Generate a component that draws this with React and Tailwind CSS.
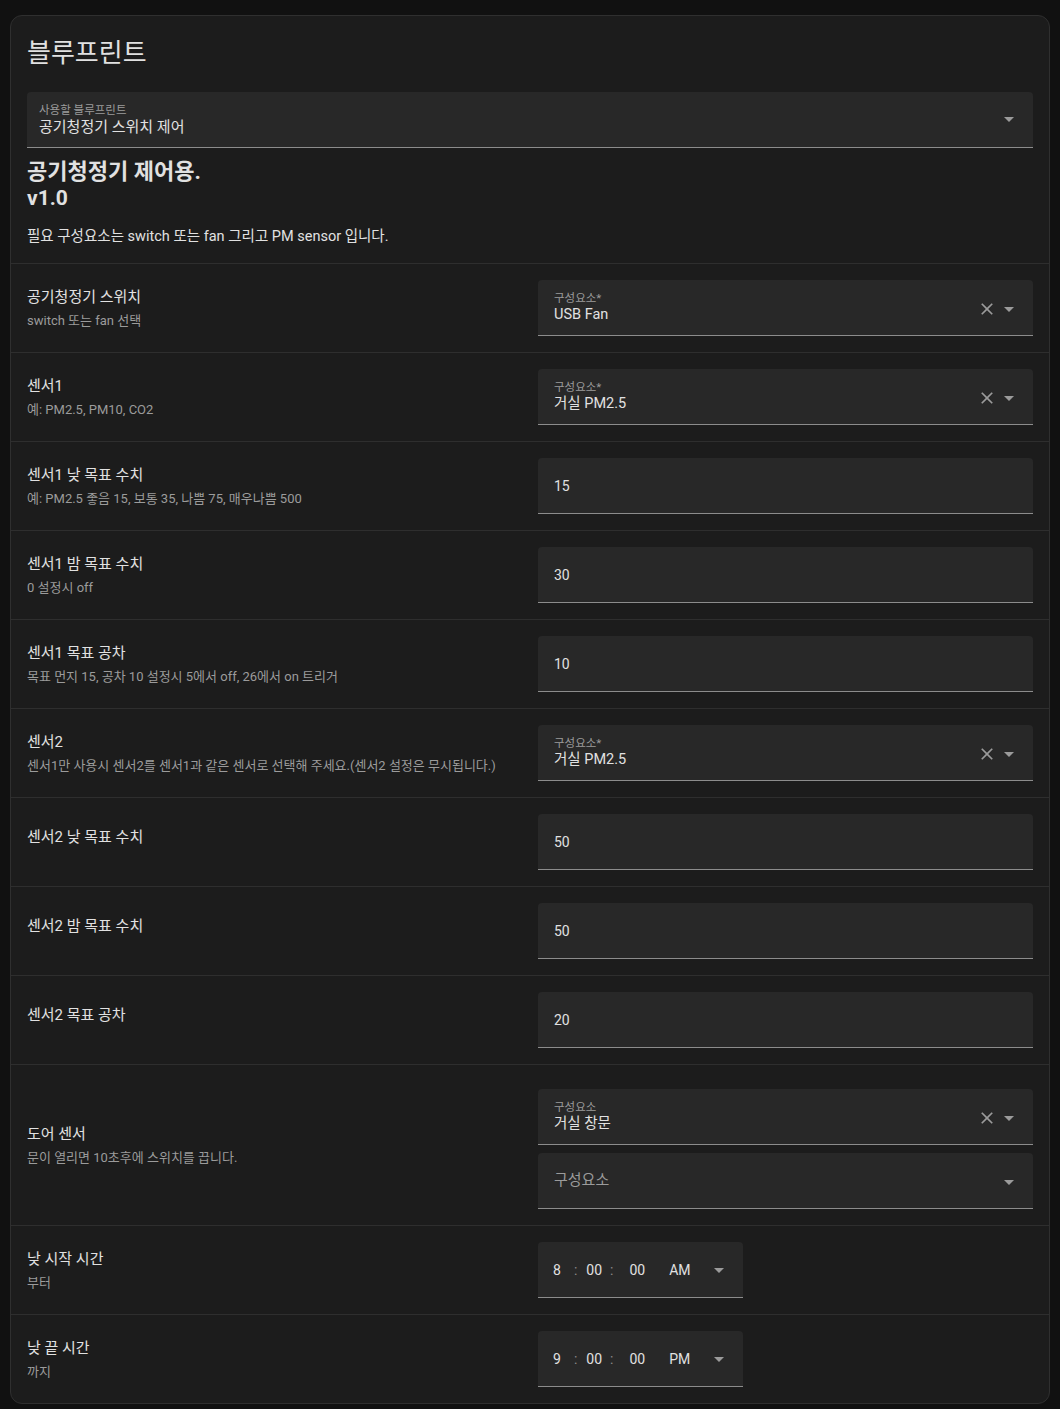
import React from "react";

const FONT = { fontFamily: "Roboto, 'Noto Sans CJK KR', sans-serif" };

function ArrowDown({ className = "" }) {
  return (
    <svg viewBox="0 0 24 24" className={`w-6 h-6 shrink-0 ${className}`}>
      <path d="M7,10L12,15L17,10H7Z" fill="#9b9b9b" />
    </svg>
  );
}

function CloseIcon() {
  return (
    <svg viewBox="0 0 24 24" className="w-5 h-5 shrink-0">
      <path
        d="M19,6.41L17.59,5L12,10.59L6.41,5L5,6.41L10.59,12L5,17.59L6.41,19L12,13.41L17.59,19L19,17.59L13.41,12L19,6.41Z"
        fill="#9b9b9b"
      />
    </svg>
  );
}

// filled select with floating label and current value
function EntitySelect({ label, value, clearable = true }) {
  return (
    <div className="flex h-14 w-full rounded-t bg-[#282828] border-b border-[#8c8c8c] pl-4 pr-3">
      <div className="flex-1 pt-[10px]">
        <div className="text-[11.5px] leading-4 text-[#9b9b9b]">{label}</div>
        <div className="-mt-px text-[14.5px] leading-5 text-[#e1e1e1]">{value}</div>
      </div>
      <div className="flex items-center mt-[2px]">
        {clearable && <CloseIcon />}
        <ArrowDown />
      </div>
    </div>
  );
}

function EmptySelect({ placeholder }) {
  return (
    <div className="flex items-center h-14 w-full rounded-t bg-[#282828] border-b border-[#8c8c8c] pl-4 pr-3">
      <div className="flex-1 text-[15px] text-[#9b9b9b]">{placeholder}</div>
      <ArrowDown className="mt-[2px]" />
    </div>
  );
}

function NumberField({ value }) {
  return (
    <div className="flex items-center h-14 w-full rounded-t bg-[#282828] border-b border-[#8c8c8c] pl-4">
      <span className="text-sm text-[#e1e1e1]">{value}</span>
    </div>
  );
}

function TimeField({ hour, minute, second, period }) {
  return (
    <div className="flex items-center h-14 w-[205px] rounded-t bg-[#282828] border-b border-[#8c8c8c] pl-[15px] text-sm text-[#e1e1e1]">
      <span>{hour}</span>
      <span className="ml-[13px] text-[#8c8c8c]">:</span>
      <span className="ml-[9px]">{minute}</span>
      <span className="ml-[8px] text-[#8c8c8c]">:</span>
      <span className="ml-[16px]">{second}</span>
      <span className="ml-[24px]">{period}</span>
      <ArrowDown className="ml-auto mr-3" />
    </div>
  );
}

function Row({ title, description, children, extraTop = false }) {
  return (
    <div className="flex items-center border-t border-[#2e2e2e] px-4 py-4">
      <div className={`flex-1 pr-4 ${description ? "" : "pb-[10px]"}`}>
        <div className="text-[15px] leading-5 text-[#e1e1e1]">{title}</div>
        {description && (
          <div className="mt-1.5 text-[13px] leading-4 text-[#9b9b9b]">{description}</div>
        )}
      </div>
      <div className={`w-[495px] shrink-0 flex flex-col gap-2 ${extraTop ? "pt-2" : ""}`}>
        {children}
      </div>
    </div>
  );
}

export default function App() {
  return (
    <div className="min-h-[1409px] bg-[#111111] px-[10px] pt-[15px] pb-[6px]" style={FONT}>
      <div className="rounded-xl border border-[#2f2f2f] bg-[#1c1c1c] overflow-hidden">
        {/* header */}
        <div className="px-4 pt-[21px] pb-[16px]">
          <h1 className="text-[26px] leading-8 text-[#e1e1e1]">블루프린트</h1>

          <div className="mt-[23px] flex h-14 rounded-t bg-[#282828] border-b border-[#8c8c8c] pl-3 pr-3">
            <div className="flex-1 pt-[10px]">
              <div className="text-[11.5px] leading-4 text-[#9b9b9b]">사용할 블루프린트</div>
              <div className="-mt-px text-[15px] leading-5 text-[#e1e1e1]">공기청정기 스위치 제어</div>
            </div>
            <div className="flex items-center mt-[-2px]">
              <ArrowDown />
            </div>
          </div>

          <div className="mt-[11px] leading-[26px] font-bold text-[#e1e1e1]">
            <div className="text-[22px]">공기청정기 제어용.</div>
            <div className="text-[21px]">v1.0</div>
          </div>
          <p className="mt-[16px] text-[14.5px] leading-5 text-[#e1e1e1]">
            필요 구성요소는 switch 또는 fan 그리고 PM sensor 입니다.
          </p>
        </div>

        <Row title="공기청정기 스위치" description="switch 또는 fan 선택">
          <EntitySelect label="구성요소*" value="USB Fan" />
        </Row>
        <Row title="센서1" description="예: PM2.5, PM10, CO2">
          <EntitySelect label="구성요소*" value="거실 PM2.5" />
        </Row>
        <Row
          title="센서1 낮 목표 수치"
          description="예: PM2.5 좋음 15, 보통 35, 나쁨 75, 매우나쁨 500"
        >
          <NumberField value="15" />
        </Row>
        <Row title="센서1 밤 목표 수치" description="0 설정시 off">
          <NumberField value="30" />
        </Row>
        <Row
          title="센서1 목표 공차"
          description="목표 먼지 15, 공차 10 설정시 5에서 off, 26에서 on 트리거"
        >
          <NumberField value="10" />
        </Row>
        <Row
          title="센서2"
          description="센서1만 사용시 센서2를 센서1과 같은 센서로 선택해 주세요.(센서2 설정은 무시됩니다.)"
        >
          <EntitySelect label="구성요소*" value="거실 PM2.5" />
        </Row>
        <Row title="센서2 낮 목표 수치">
          <NumberField value="50" />
        </Row>
        <Row title="센서2 밤 목표 수치">
          <NumberField value="50" />
        </Row>
        <Row title="센서2 목표 공차">
          <NumberField value="20" />
        </Row>
        <Row
          title="도어 센서"
          description="문이 열리면 10초후에 스위치를 끕니다."
          extraTop
        >
          <EntitySelect label="구성요소" value="거실 창문" />
          <EmptySelect placeholder="구성요소" />
        </Row>
        <Row title="낮 시작 시간" description="부터">
          <TimeField hour="8" minute="00" second="00" period="AM" />
        </Row>
        <Row title="낮 끝 시간" description="까지">
          <TimeField hour="9" minute="00" second="00" period="PM" />
        </Row>
      </div>
    </div>
  );
}
